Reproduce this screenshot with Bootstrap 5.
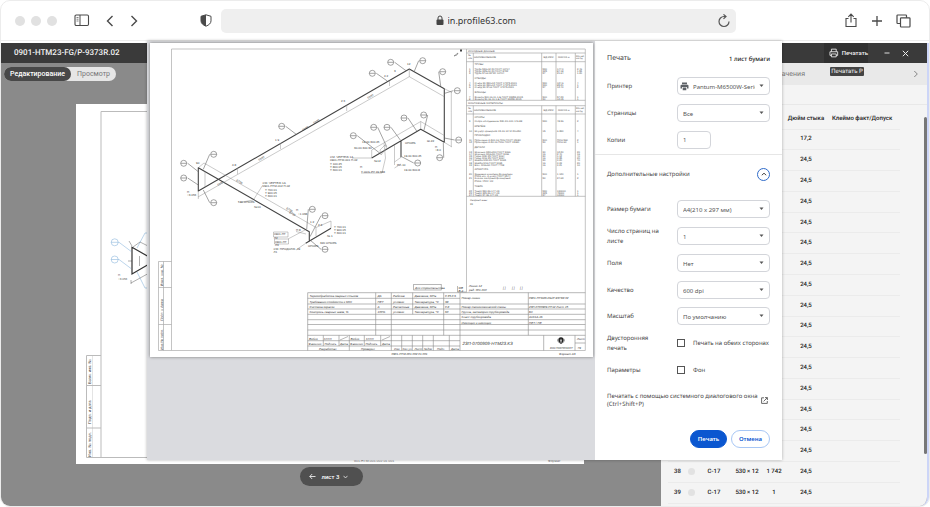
<!DOCTYPE html>
<html lang="ru">
<head>
<meta charset="utf-8">
<meta name="viewport" content="width=device-width, initial-scale=1">
<title>0901-HTM23-FG/P-9373R.02</title>
<link href="https://cdn.jsdelivr.net/npm/bootstrap@5.3.0/dist/css/bootstrap.min.css" rel="stylesheet">
<style>
  body { font-family: "Noto Sans", "Open Sans", sans-serif; font-size: 6px; line-height: 10px; color: #444; background: #fff; text-rendering: geometricPrecision; }
  button { font: inherit; color: inherit; }
  .window { min-height: 100vh; border: 1px solid #ececec; border-radius: 10px; }
  .chrome { height: 40px; border-bottom: 1px solid #eee; color: #4a4a4a; }
  .chrome-start { width: 220px; padding-left: 14px; padding-right: 9px; }
  .chrome-end { width: 193px; padding-right: 18px; gap: 12px; }
  .dots { gap: 6px; margin-right: 17px; }
  .dots span { width: 10px; height: 10px; border-radius: 50%; background: #e1e1e1; }
  .plain { border: 0; background: none; padding: 0; display: flex; align-items: center; }
  .address { height: 24px; border-radius: 5px; background: #efefef; }
  .address input { border: 0; background: none; outline: 0; width: 74px; padding: 0; font: 9px/14px "Noto Sans", sans-serif; color: #333; }
  .address .reload { right: 5px; top: 5px; }
  .main-area { padding: 2px 0 0; }
  .app { background: #8a8a8a; border-radius: 0 0 9px 9px; overflow: hidden; border-right: 2px solid #ccd5f7; font-family: Roboto, sans-serif; }
  .titlebar { height: 20px; background: #3a3a3a; color: #f2f2f2; padding-left: 13px; padding-right: 17px; }
  .titlebar h1 { font-size: 8px; line-height: 20px; font-weight: 500; }
  .print-btn { background: #303030; height: 20px; width: 44px; padding-left: 5px; gap: 3px; font-size: 6px; margin-right: 13px; font-weight: 500; }
  .tip { top: 24px; right: 63px; background: #444; color: #f4f4f4; border-radius: 1px; width: 34px; height: 9px; line-height: 9px; text-align: center; }
  .switcher { margin: 4px 0 0 3px; background: #e6e6e6; border-radius: 8px; height: 14px; font-size: 7px; color: #777; }
  .switcher button { border: 0; background: none; padding: 0 6px; border-radius: 8px; }
  .switcher button.on { background: #484848; color: #fff; font-weight: 500; }
  .back-sheet { display: block; width: 508px; margin: 23px 0 0 75px; background: #fff; }
  .pager { background: #505050; color: #fff; border-radius: 10px; width: 63px; height: 19px; margin-top: 3px; margin-bottom: 18px; padding-left: 9px; gap: 6px; font-weight: 500; }
  .side { width: 266px; background: #f4f4f4; }
  .side-head { height: 22px; background: #e9e9e9; padding: 0 8px 0 0; font-size: 7px; color: #777; }
  .side-head span { margin-right: 108px; }
  .side-gap { height: 20px; border-bottom: 1px solid #e8e8e8; }
  .welds { margin: 0 0 0 7px; width: 232px; table-layout: fixed; height: 399px; color: #222; text-align: center; }
  .welds th, .welds td { padding: 0; border-bottom: 1px solid #ebebeb; line-height: 8px; font-weight: 500; }
  .welds th { height: 24px; padding-top: 4px; white-space: nowrap; }
  .welds th:last-child { text-align: left; padding-left: 6px; }
  .dot { display: inline-block; width: 7px; height: 7px; border-radius: 50%; background: #e2e2e2; vertical-align: middle; }
  .scroll { width: 3px; right: 0; top: 54px; height: 337px; border-radius: 2px; background: #777; }
  .overlay { top: 0; left: 0; right: 0; padding-right: 1px; }
  .dialog-box { width: 635px; background: #fff; box-shadow: 0 0 3px rgba(0,0,0,.3); }
  .preview { background: #dadbdf; padding: 2px 2px 0 3px; }
  .sheet { display: block; width: 100%; background: #fff; box-shadow: 0 0 3px #777; }
  .settings { width: 187px; padding: 13px 12px 12px; }
  .settings h2 { font-size: 7px; line-height: 10px; font-weight: 400; }
  .settings .total { font-weight: 500; color: #222; }
  .rows3 { min-height: 80px; margin-top: 9px; }
  .rows7 { min-height: 187px; margin-top: 15px; }
  .line { flex: 1 1 0; }
  .name { width: 70px; flex: none; padding-right: 12px; }
  .field { width: 93px; height: 18px; border: 1px solid #d3d5da; border-radius: 4px; background: #fff; color: #555; font-size: 6px; position: relative; }
  .field select, .field input { appearance: none; border: 0; background: none; outline: 0; width: 100%; height: 100%; padding: 2px 14px 0 5px; font: inherit; color: inherit; }
  .field.short { width: 34px; }
  .field.short input { padding-right: 2px; padding-top: 0; }
  .field.with-icon select { padding-left: 4px; }
  .field.with-icon svg.ico { margin-left: 2px; flex: none; }
  .field .caret { position: absolute; right: 5px; top: 6px; }
  .rule { margin: 1px -12px 0; border-top: 1px solid #e6e6e6; }
  .more { margin-top: 12px; height: 14px; }
  .more button { width: 13px; height: 13px; border: 1px solid #2f6bc9; border-radius: 50%; justify-content: center; }
  .tick { appearance: none; width: 8px; height: 8px; border: 1px solid #555; margin: 0 8px 0 0; flex: none; }
  .tick:checked { background: #0b57d0; }
  .system { margin-top: 9px; padding-right: 2px; color: #444; line-height: 8px; text-decoration: none; white-space: nowrap; }
  .system:hover { text-decoration: underline; }
  .actions { gap: 4px; margin-top: 22px; }
  .actions button { height: 18px; border-radius: 9px; padding: 0; font-weight: 600; }
  .go { width: 37px; background: #0b57d0; border: 1px solid #0b57d0; color: #fff; }
  .cancel { width: 39px; background: #fff; border: 1px solid #a8c7f5; color: #0b57d0; }
</style>
</head>
<body>
<div class="window d-flex flex-column">
  <header class="chrome d-flex align-items-center flex-shrink-0">
    <div class="chrome-start d-flex align-items-center">
      <div class="dots d-flex"><span></span><span></span><span></span></div>
      <button class="plain" aria-label="Боковая панель"><svg width="16" height="13" viewBox="0 0 16 13" fill="none" stroke="currentColor"><rect x="1" y="1" width="13.5" height="10.5" rx="1.2" stroke-width="1.1"/><path d="M6 1v10.500" stroke-width="1"/><path d="M2.500 3.500h2M2.500 5.200h2M2.500 7h2" stroke-width=".7"/></svg></button>
      <button class="plain ms-3" aria-label="Назад"><svg width="8" height="12" viewBox="0 0 8 12" fill="none" stroke="currentColor" stroke-width="1.400"><path d="M6.500 1 1.500 6l5 5"/></svg></button>
      <button class="plain ms-3" aria-label="Вперёд"><svg width="8" height="12" viewBox="0 0 8 12" fill="none" stroke="currentColor" stroke-width="1.400"><path d="m1.500 1 5 5-5 5"/></svg></button>
      <svg class="ms-auto" width="12" height="13" viewBox="0 0 12 13"><path d="M6 .8 11 2.300v4.500c0 2.500-2 4.200-5 5.400C3 11 1 9.300 1 6.800V2.300Z" fill="none" stroke="#4a4a4a"/><path d="M6 .8 1 2.300v4.500C1 9.300 3 11 6 12.200Z" fill="#4a4a4a"/></svg>
    </div>
    <div class="address flex-grow-1 position-relative d-flex align-items-center justify-content-center">
      <svg class="me-1" width="8" height="11" viewBox="0 0 8 11"><rect x=".5" y="4.500" width="7" height="5.500" rx="1" fill="#444"/><path d="M2 5V3a2 2 0 0 1 4 0v2" fill="none" stroke="#444"/></svg>
      <input type="text" value="in.profile63.com" aria-label="Адрес">
      <button class="plain reload position-absolute" aria-label="Обновить"><svg width="14" height="14" viewBox="0 0 14 14" fill="none" stroke="#555" stroke-width="1.200"><path d="M12 7.500a5 5 0 1 1-5-5h1.500M6.500.4l2.500 2.100-2.500 2.400"/></svg></button>
    </div>
    <div class="chrome-end d-flex align-items-center justify-content-end">
      <button class="plain" aria-label="Поделиться"><svg width="14" height="15" viewBox="0 0 14 15" fill="none" stroke="currentColor" stroke-width="1.100"><path d="M4.500 5.500H2V13.500h10V5.500H9.500M7 9.500V1.300M4.300 3.800 7 1.100l2.700 2.700"/></svg></button>
      <button class="plain" aria-label="Новая вкладка"><svg width="14" height="14" viewBox="0 0 14 14" stroke="currentColor" stroke-width="1.300"><path d="M7 2v10M2 7h10"/></svg></button>
      <button class="plain" aria-label="Вкладки"><svg width="15" height="14" viewBox="0 0 15 14" fill="none" stroke="currentColor" stroke-width="1.200"><path d="M4.500 9.500H1.700a.7.700 0 0 1-.7-.7V1.700a.7.700 0 0 1 .7-.7h8.100a.7.700 0 0 1 .7.700v2"/><rect x="4.500" y="3.800" width="9.500" height="9.200" rx=".8"/></svg></button>
    </div>
  </header>

  <main class="main-area position-relative flex-grow-1 d-flex flex-column">
    <div class="app flex-grow-1 d-flex flex-column position-relative">
      <div class="titlebar d-flex align-items-center flex-shrink-0">
        <h1 class="m-0 me-auto">0901-HTM23-FG/P-9373R.02</h1>
        <button class="plain print-btn" aria-describedby="print-tip"><svg width="10" height="10" viewBox="0 0 10 10" fill="none" stroke="#eee" stroke-width=".9"><path d="M2.500 3.700V1h5v2.700M2.500 7.500H1V3.700h8v3.800H7.500M2.500 6h5v3h-5z"/></svg><span>Печатать</span></button>
        <button class="plain me-2" aria-label="Свернуть"><svg width="12" height="10" viewBox="0 0 12 10" stroke="#ddd"><path d="M3.500 5h5"/></svg></button>
        <button class="plain" aria-label="Закрыть"><svg width="9" height="9" viewBox="0 0 9 9" stroke="#eee"><path d="m1.800 1.800 5.400 5.400m0-5.400L1.800 7.200"/></svg></button>
      </div>
      <div class="flex-grow-1 d-flex">
        <section class="flex-grow-1 d-flex flex-column align-items-start">
          <div class="switcher d-flex" role="group">
            <button class="on">Редактирование</button><button>Просмотр</button>
          </div>
          <svg class="back-sheet" viewBox="76 104 508 360" font-family="Liberation Sans, sans-serif">
            <g fill="none" stroke="#bbb"><path d="M101 457.500V111.500H580V457.500H86.500V355.500H101M86.500 385.500H101M86.500 428H101"/><path d="M92.500 355.500v102" stroke-width=".4"/></g>
            <g font-size="4" fill="#444"><text transform="translate(91 384) rotate(-90)">Взам. инв. №</text><text transform="translate(91 424) rotate(-90)">Подп. и дата</text><text transform="translate(91 457) rotate(-90)">Инв. № подл.</text></g>
            <g fill="none" stroke="#8fb8de" stroke-width=".6"><circle cx="114.700" cy="242.300" r="3.500"/><path d="M111 242.300h8l12 9M111 259.500h8l12 9M137 248l8-15h4M137 272l8 16h4"/><circle cx="114.700" cy="259.500" r="3.500"/></g>
            <g fill="none" stroke="#333"><path d="M150 257.500 132 247.300V274l18-10.500" stroke-width="1.200"/><path d="M131 283l20-11M131 280v4M139.500 256v10M129 241l3 5M133 247l7-5 9 4.500M128 261h4" stroke-width=".4"/></g>
            <text x="118" y="280" font-size="3" fill="#555">+3.056</text><text x="118" y="276" font-size="3" fill="#555">П</text>
            <text x="354" y="462" font-size="3.500" fill="#777">901-HTM-001.002.01.001</text><text x="548" y="462" font-size="3.500" fill="#777">Формат</text>
          </svg>
          <div class="pager align-self-center d-flex align-items-center">
            <button class="plain" aria-label="Предыдущий лист"><svg width="7" height="7" viewBox="0 0 7 7" fill="none" stroke="#fff" stroke-width=".8"><path d="M6.500 3.500H.8M3.200 1 .8 3.500 3.200 6"/></svg></button>
            <button class="plain">лист 3<svg class="ms-1" width="5" height="4" viewBox="0 0 5 4" fill="none" stroke="#fff" stroke-width=".7"><path d="M.5.800 2.500 3 4.500.8"/></svg></button>
          </div>
        </section>
        <aside class="side flex-shrink-0 position-relative">
          <div class="side-head d-flex align-items-center justify-content-end"><span>Обозначения</span><button class="plain" aria-label="Далее"><svg width="6" height="8" viewBox="0 0 6 8" fill="none" stroke="#777" stroke-width=".9"><path d="m1.300 1 3 3-3 3"/></svg></button></div>
          <div class="side-gap"></div>
          <table class="welds">
            <colgroup><col style="width:19px"><col style="width:9px"><col style="width:36px"><col style="width:30px"><col style="width:24px"><col style="width:40px"><col></colgroup>
            <thead><tr><th></th><th></th><th></th><th></th><th></th><th>Дюйм стыка</th><th>Клеймо факт/Допуск</th></tr></thead>
            <tbody>
              <tr><td colspan="5"></td><td>17,2</td><td></td></tr>
              <tr><td colspan="5"></td><td>24,5</td><td></td></tr>
              <tr><td colspan="5"></td><td>24,5</td><td></td></tr>
              <tr><td colspan="5"></td><td>24,5</td><td></td></tr>
              <tr><td colspan="5"></td><td>24,5</td><td></td></tr>
              <tr><td colspan="5"></td><td>24,5</td><td></td></tr>
              <tr><td colspan="5"></td><td>24,5</td><td></td></tr>
              <tr><td colspan="5"></td><td>24,5</td><td></td></tr>
              <tr><td colspan="5"></td><td>24,5</td><td></td></tr>
              <tr><td colspan="5"></td><td>24,5</td><td></td></tr>
              <tr><td colspan="5"></td><td>24,5</td><td></td></tr>
              <tr><td colspan="5"></td><td>24,5</td><td></td></tr>
              <tr><td colspan="5"></td><td>24,5</td><td></td></tr>
              <tr><td colspan="5"></td><td>24,5</td><td></td></tr>
              <tr><td colspan="5"></td><td>24,5</td><td></td></tr>
              <tr><td colspan="5"></td><td>24,5</td><td></td></tr>
              <tr><td>38</td><td><span class="dot"></span></td><td>С-17</td><td>530 × 12</td><td>1 742</td><td>24,5</td><td></td></tr>
              <tr><td>39</td><td><span class="dot"></span></td><td>С-17</td><td>530 × 12</td><td>1</td><td>24,5</td><td></td></tr>
            </tbody>
          </table>
          <div class="scroll position-absolute"></div>
        </aside>
      </div>
      <div class="tip position-absolute" id="print-tip" role="tooltip">Печатать P</div>
    </div>

    <div class="overlay position-absolute d-flex justify-content-center">
      <div class="dialog-box d-flex" role="dialog" aria-label="Печать">
        <div class="preview flex-grow-1">
          <svg class="sheet" viewBox="150 43 443 314" font-family="Liberation Sans Narrow, Liberation Sans, sans-serif" role="img" aria-label="Изометрический чертёж">
            <g fill="none" stroke="#aaa" stroke-width=".7">
              <path d="M171.500 350.500V49H585.300V350.500Z"/>
              <path d="M158.500 261.500H171.500M158.500 261.500V350.500H171.500M163.500 261.500V350.500M158.500 287.500H171.500M158.500 324.500H171.500"/>
              <path d="M466.500 49V292.500"/>
            </g>
            <g font-size="3.500" font-style="italic" fill="#444"><text transform="translate(162.500 286) rotate(-90)">Взам. инв. №</text><text transform="translate(162.500 321) rotate(-90)">Подп. и дата</text><text transform="translate(162.500 350) rotate(-90)">Инв.№ подл.</text></g>

            <g fill="none" stroke="#444" stroke-width="1.100" stroke-linejoin="round">
              <path d="M309.300 241.700V231.700L198.300 167.700V191L409.300 69 444.300 88.700V142.300L420.700 129.300 371.700 158M401 141V157.300M305.700 243.300 331 228.300"/>
            </g>
            <g fill="none" stroke="#888" stroke-width=".45">
              <path d="M198 197 409.300 76.700 444.300 96.700M198.300 191V199M409.300 69V77M389.500 80.500V86M346.700 105V111M280.500 143V149M237.500 168V174M451.300 91.700V146.700M444.300 88.700 452 92.500M444.300 142.300 452 147"/>
              <path d="M198.300 167.700 204 163 316 227.500M205 171.500V187M371.700 158V150L420.700 121.500 444.300 135.500M420.700 121.500V129M371.700 158H352M384 143.500 385.500 158 382 173H361M394.500 145V165M394.500 168 401 164M401 157.300 394.500 162M316 227.500 331 221V228M316 227.500V236M254 199 262.500 185.500M253 200 240 202.500M306 234 296 231.500M288 239 305 230M296 250 305.700 243.300M273.500 232H288V237H273.500zM274.500 239H288.500V244H274.500z"/>
              <path d="M380 150 385 145 386.500 148 381 155Z"/>
            </g>
            <g id="bubbles" fill="none" stroke="#666" stroke-width=".6"></g>
            <g id="notes" font-size="3" fill="#444"></g>
            <path d="m454 56 4-3-1 2z" fill="none" stroke="#555" stroke-width=".5"/><path d="M460 49.500h2v2h-2z" fill="#444"/>

            <g fill="none" stroke="#999" stroke-width=".6">
              <path d="M466.500 53H585.300M466.500 61.700H585.300M466.500 100.300H585.300M466.500 105.700H585.300M466.500 114H585.300M466.500 196.300H585.300"/>
              <path d="M473.300 53V100.300M541.700 53V100.300M556 53V100.300M575.300 53V100.300M473.300 105.700V196.300M541.700 105.700V196.300M556 105.700V196.300M575.300 105.700V196.300"/>
            </g>
            <g id="parts" font-size="2.600" fill="#555"></g>

            <g fill="none" stroke="#888" stroke-width=".6">
              <rect x="413.700" y="284.500" width="27.500" height="5.500"/>
              <path d="M307.700 350.500V292.700H585.300M307.700 298.300H460M307.700 304H585.300M307.700 309H585.300M307.700 314.300H585.300M307.700 319.700H585.300M307.700 324.500H585.300M307.700 330H585.300M307.700 335.300H585.300M307.700 340.700H460M307.700 346H460M575 343H585.300"/>
              <path d="M375.700 292.700V335.300M391.300 292.700V350.500M412.700 292.700V314.300M443.700 292.700V335.300M460 292.700V350.500M528.300 292.700V335.300M323.300 335.300V346M339 335.300V346M349.300 335.300V350.500M364.300 335.300V346M380.700 335.300V346M401.700 335.300V350.500M412.300 335.300V350.500M422.700 335.300V350.500M433.300 335.300V350.500M449.300 335.300V350.500M543.700 335.300V350.500M575 335.300V350.500M457.500 286V292H466"/>
              <path d="m340 340 8-3.500M382 340l8-3.500"/>
            </g>
            <g id="stamp" font-size="3" fill="#333" font-style="italic"></g>
            <g fill="#222"><circle cx="561" cy="340" r="2.700"/><path d="M557 338.500q-.5 3 4 5.500 4.500-2.500 4-5.500l-1 3-3 1.700-3-1.700z"/><path d="m560 341.500 1-3 1 3z" fill="#fff"/></g>
          </svg>
        </div>

        <form class="settings flex-shrink-0" onsubmit="return false">
          <div class="d-flex justify-content-between align-items-center"><h2 class="m-0">Печать</h2><span class="total">1 лист бумаги</span></div>
          <div class="rows3 d-flex flex-column">
            <div class="line d-flex align-items-center"><label class="name" for="printer">Принтер</label>
              <div class="field with-icon d-flex align-items-center"><svg class="ico" width="9" height="9" viewBox="0 0 9 9" fill="#5f6368"><path d="M2 .5h5v1.700H2zM1.500 2.700h6q1 0 1 1V6.500H7V5H2v1.500H.5V3.700q0-1 1-1zM2.700 5.600h3.600v2.600H2.700z"/></svg><select id="printer"><option>Pantum-M6500W-Series</option></select><svg class="caret" width="5" height="4" viewBox="0 0 5 4"><path d="M.5.500h4L2.500 3z" fill="#555"/></svg></div></div>
            <div class="line d-flex align-items-center"><label class="name" for="pages">Страницы</label>
              <div class="field"><select id="pages"><option>Все</option></select><svg class="caret" width="5" height="4" viewBox="0 0 5 4"><path d="M.5.500h4L2.500 3z" fill="#555"/></svg></div></div>
            <div class="line d-flex align-items-center"><label class="name" for="copies">Копии</label>
              <div class="field short"><input id="copies" type="text" inputmode="numeric" value="1"></div></div>
          </div>
          <div class="rule"></div>
          <div class="more d-flex align-items-center justify-content-between"><span>Дополнительные настройки</span><button type="button" class="plain" aria-label="Свернуть настройки"><svg width="6" height="4" viewBox="0 0 6 4" fill="none" stroke="#333" stroke-width=".9"><path d="m.8 3.200 2.200-2 2.200 2"/></svg></button></div>
          <div class="rows7 d-flex flex-column">
            <div class="line d-flex align-items-center"><label class="name" for="size">Размер бумаги</label>
              <div class="field"><select id="size"><option>A4(210 x 297 мм)</option></select><svg class="caret" width="5" height="4" viewBox="0 0 5 4"><path d="M.5.500h4L2.500 3z" fill="#555"/></svg></div></div>
            <div class="line d-flex align-items-center"><label class="name" for="per">Число страниц на листе</label>
              <div class="field"><select id="per"><option>1</option></select><svg class="caret" width="5" height="4" viewBox="0 0 5 4"><path d="M.5.500h4L2.500 3z" fill="#555"/></svg></div></div>
            <div class="line d-flex align-items-center"><label class="name" for="margins">Поля</label>
              <div class="field"><select id="margins"><option>Нет</option></select><svg class="caret" width="5" height="4" viewBox="0 0 5 4"><path d="M.5.500h4L2.500 3z" fill="#555"/></svg></div></div>
            <div class="line d-flex align-items-center"><label class="name" for="quality">Качество</label>
              <div class="field"><select id="quality"><option>600 dpi</option></select><svg class="caret" width="5" height="4" viewBox="0 0 5 4"><path d="M.5.500h4L2.500 3z" fill="#555"/></svg></div></div>
            <div class="line d-flex align-items-center"><label class="name" for="scale">Масштаб</label>
              <div class="field"><select id="scale"><option>По умолчанию</option></select><svg class="caret" width="5" height="4" viewBox="0 0 5 4"><path d="M.5.500h4L2.500 3z" fill="#555"/></svg></div></div>
            <div class="line d-flex align-items-center"><span class="name">Двусторонняя печать</span>
              <input class="tick" type="checkbox" id="duplex"><label class="text-nowrap" for="duplex">Печать на обеих сторонах</label></div>
            <div class="line d-flex align-items-center"><span class="name">Параметры</span>
              <input class="tick" type="checkbox" id="bg"><label for="bg">Фон</label></div>
          </div>
          <a class="system d-flex align-items-center justify-content-between" href="#"><span>Печатать с помощью системного диалогового окна<br>(Ctrl+Shift+P)</span><svg width="7" height="7" viewBox="0 0 7 7" fill="none" stroke="#444" stroke-width=".8"><path d="M3 .8H.6v5.600h5.700V4M4 .6h2.400v2.400M6.200.800 2.600 4.400"/></svg></a>
          <div class="actions d-flex justify-content-end"><button type="button" class="go">Печать</button><button type="button" class="cancel">Отмена</button></div>
        </form>
      </div>
    </div>
  </main>
</div>

<script src="https://cdn.jsdelivr.net/npm/bootstrap@5.3.0/dist/js/bootstrap.bundle.min.js"></script>
<script>
  const put = (id, html) => { document.getElementById(id).innerHTML = html; };
  const label = (x, y, s, extra = '') => `<text x="${x}" y="${y}" ${extra}>${s}</text>`;

  // Item callouts: circle centre, then the point on the pipe
  const bubbles = [
    [390.7,62.3,406,70.7],[422.7,60.7,414.3,71.3],[372.3,73.3,387.3,81],[442.7,71.7,440.7,86],[457.3,90.7,444.7,93.3],
    [281.7,126.3,296.7,134.7],[213.7,154.3,203.3,169.3],[183.7,163.3,198.3,171.7],[183.7,178,198.3,185],[213.7,202.7,203.3,190],
    [404,118,416.7,131],[423.7,115,424,130],[373.7,127.3,386.7,146.7],[387,127.3,400.3,140],[353.3,135.7,380,153.3],
    [458.7,140,444.3,138],[439.7,157.7,443.3,142.7],[417.7,163,401.7,156.7],[312.3,209.3,306.7,229.3],[325,215.7,310,236.7],[325,249.3,310,240]
  ];
  put('bubbles', bubbles.map(([x, y, px, py]) => {
    const sx = x + (px > x ? 4 : -4);
    return `<circle cx="${x}" cy="${y}" r="3"/><path d="M${x - 3} ${y}H${x + 3}M${sx} ${y}L${px} ${py}"/>`;
  }).join(''));

  const notes = [
    [262.5,184,'СМ. ЧЕРТЕЖ 1А'],[262.5,187,'0901-НТМ-012 П-02'],[265,190.500,'Т 700.01'],[265,193.500,'Т 900.05'],[265,196.500,'Т 600.01'],
    [330,158,'СМ. ЧЕРТЕЖ 1А'],[330,161,'0901-НТМ-001 П-02'],[330,164.500,'Т 100.25'],[330,167.500,'Т 800.05'],[330,170.500,'Т 600.01'],
    [238,203,'530 ОПОРА'],[254,207.500,'№10'],[361,172.500,'Т ОСЬ РУ 19.388'],[360,168,'П'],[405,143.500,'ОПОРА'],
    [404,156.500,'19.00.300.25'],[404,170.500,'19.00.300.8'],[362,142.500,'19.00.300.25'],[354,148.500,'30-00.300.30'],[397,165.500,'РС-10'],
    [274,235,'0901-НТ'],[274,239,'Л2'],[275,242.500,'0901-НТ'],[275,246,'Л3'],[273.500,249.500,'СМ. ПРОДОЛЖ. 19'],[273.500,252.500,'Л1'],
    [334,228,'Т 700.01'],[334,231,'Т 900.05'],[334,234,'Т 600.01'],[320,243.500,'320 ОПОРА'],[308,246.500,'ОПОРА'],[298,215,'+1.068'],[296,211,'П'],
    [187,196,'+3.056'],[187,193,'П'],[435,150.500,'+8.0'],[435,147.500,'П'],[427,141.500,'Ш-22'],[374,161.500,'№12'],[384,76.500,'4 2'],
    [341,101.500,'2 6'],[275,140.500,'1 9'],[232,165.500,'4 8'],[407,65,'12'],[196,164,'90'],[394,72,'3'],[310,223,'1 2'],[318,226,'2 3'],[296,231,'П 8'],[327,237,'№ 1']
  ];
  put('notes', notes.map(n => label(...n)).join('') +
    [[303,131],[314,124],[368,99],[259,161],[218,186]].map(([x, y]) => `<text transform="translate(${x} ${y}) rotate(-30)">6000</text>`).join('') +
    [[236,181],[286,209],[289,213]].map(([x, y]) => `<text transform="translate(${x} ${y}) rotate(30)">8700</text>`).join(''));

  // Material list: y, position number, name, unit code, mass, quantity
  const head = y => label(468, y - 2, '№') + label(468, y + 1, 'поз') + label(474, y, 'НАИМЕНОВАНИЕ') + label(543.5, y, 'ЕД.ИЗМ') + label(558, y, 'МАССА кг') + label(576, y - 1.5, 'Кол-во') + label(576, y + 1, 'на ед.');
  const parts = [
    [64.500,'','ТРУБЫ'],[69.500,1,'Труба 530х12 20 ГОСТ 10704','530','147.0','2.46'],[71.500,2,'Труба 325х10 20 ГОСТ 8732','325','84.18','1.55'],[73.500,3,'Труба 57х6 09Г2С 10704','57','21.64','1.20'],
    [79,'','ОТВОДЫ'],[83.500,4,'Отвод 90-530х12 ГОСТ 17375-2001','530','124.6','4'],[85.500,5,'Отвод 60-530х12 ГОСТ 17375-2001','530','85.21','1'],[87.500,6,'Отвод 90-57х6 ГОСТ 17375-2001','57','12.40','2'],
    [92.500,'','ФЛАНЦЫ'],[97.500,7,'Фланец 500-16-11-1-В ГОСТ 33259-2015','500','57.23','1'],[99.500,8,'Фланец 50-16-11-1-В ГОСТ 33259-2015','50','12.05','1'],
    [117.500,'','ОПОРЫ'],[122,9,'Опора неподвижная 530-КХ-А11 146-88','530','48.36','2'],
    [127,'','КРЕПЁЖ'],[131.500,10,'Штуцер приварной 15-16 ХС М 20х150','15','6.390','4'],
    [136,'','ПРОКЛАДКИ'],[141,11,'Прокладка А-500-16 ПОН ГОСТ 15180','500','ПОН 560','2'],[143,12,'Прокладка А-50-16 ПОН ГОСТ 15180','50','ПОН 60','1'],
    [147.500,'','ДЕТАЛИ'],[152.500,13,'Шпилька М30х200 ГОСТ 9066','30','12.20','20'],[154.500,14,'Шпилька М16х90 ГОСТ 9066','16','2.40','16'],[156.500,15,'Гайка М30 25 ГОСТ 9064','30','1.12','40'],[158.500,16,'Гайка М16 25 ГОСТ 9064','16','0.35','20'],[161,17,'Шайба М30.20 ГОСТ 9065','30','0.20','40'],[163.500,18,'Шайба М16 ГОСТ 9065','16','0.09','20'],[165.500,19,'Болт М16х60 ГОСТ 7798','16','0.21','10'],
    [170,'','АРМАТУРА'],[175,20,'Задвижка клиновая фланцевая','500','1 120','1'],[177,'','PN16 исп. А класс ГОСТ 9544'],[179,21,'Клапан запорный фланцевый','50','24.63','2'],[181.500,'','PN16 / РОС 1М'],
    [186.500,'','ТАВРА'],[191.500,22,'Тавро 530-36-147-09','530','130000','1'],[193.500,23,'Тавро 325-36-147-09','325','45000','1'],[195.500,24,'Тавро 57-36-147-09','57','12000','1']
  ];
  put('parts', label(468, 52, 'ИСХОДНЫЕ ДАННЫЕ') + label(468, 104, 'МОНТАЖНЫЕ МАТЕРИАЛЫ') + head(58) + head(110.5) +
    parts.map(([y, n, name, a = '', m = '', q = '']) => label(469, y, n) + label(474.5, y, name) + label(542.500, y, a) + label(557, y, m) + label(577, y, q)).join('') +
    label(470, 200.500, 'Сварные швы:') + label(470, 204.500, '39'));

  const stamp = [
    [415,288.600,'Для строительства'],
    [309.500,297,'Термообработка сварных стыков'],[309.500,302.500,'Требования стойкости к МКК'],[309.500,307.800,'Система окраски'],[309.500,313,'Контроль сварных швов, %'],
    [377.500,297,'ДА'],[377.500,302.500,'НЕТ'],[377.500,307.800,'А'],[377.500,313,'100%'],
    [393,297,'Рабочие'],[393,302.500,'условия'],[393,307.800,'Расчетные'],[393,313,'условия'],
    [414.500,297,'Давление, МПа'],[414.500,302.500,'Температура, °С'],[414.500,307.800,'Давление, МПа'],[414.500,313,'Температура, °С'],
    [445,297,'0.35-0.6'],[445,302.500,'38'],[445,307.800,'0.8'],[445,313,'60'],
    [461.500,299,'Номер линии'],[461.500,307.800,'Номер технологической схемы'],[461.500,313,'Группа, категория трубопровода'],[461.500,318.300,'Класс трубопровода'],[461.500,323.500,'Изоляция и изоляция'],
    [529,299,'0901-HTM23-FG/P-9373R.02'],[529,307.800,'23П-0700909-НТ12 Лист 15'],[529,313,'БII'],[529,318.300,'A1F1A-16'],[529,323.500,'НЕТ / НЕ'],
    [309,339.600,'Вобло'],[324,339.600,'КХХХ'],[350.500,339.600,'Вобло'],[366,339.600,'КХХХ'],
    [308.500,345,'Фамилия'],[324.500,345,'Подпись'],[340,345,'Дата'],[350,345,'Фамилия'],[365.500,345,'Подпись'],[382,345,'Дата'],
    [319,350,'Разработал'],[361,350,'Проверил'],[394,350,'Изм.'],[402.500,350,'Кол.уч'],[414.500,350,'Лист'],[424,350,'№док'],[437,350,'Подп.'],[451,350,'Дата'],
    [577,340.300,'Лист'],[577.500,349,'79'],[559,354.500,'Формат А3'],[391.500,354.500,'0901-HTM-001.002.01.001'],
    [469,287,'Линия 12'],[469,290.500,'ред. 001-010'],[503,288.500,'[ ]'],[512,288.500,'[ ]'],[520,288.500,'[ ]'],[458.500,288.500,'МВ'],[458.500,291.500,'В-4']
  ];
  put('stamp', stamp.map(n => label(...n)).join('') + label(462.5, 345, '23П-0700909-НТМ23.КЗ', 'font-size="4.500"') + label(550, 348.700, 'ВОСТОКПРОЕКТ', 'font-size="2.800"'));
</script>
</body>
</html>
